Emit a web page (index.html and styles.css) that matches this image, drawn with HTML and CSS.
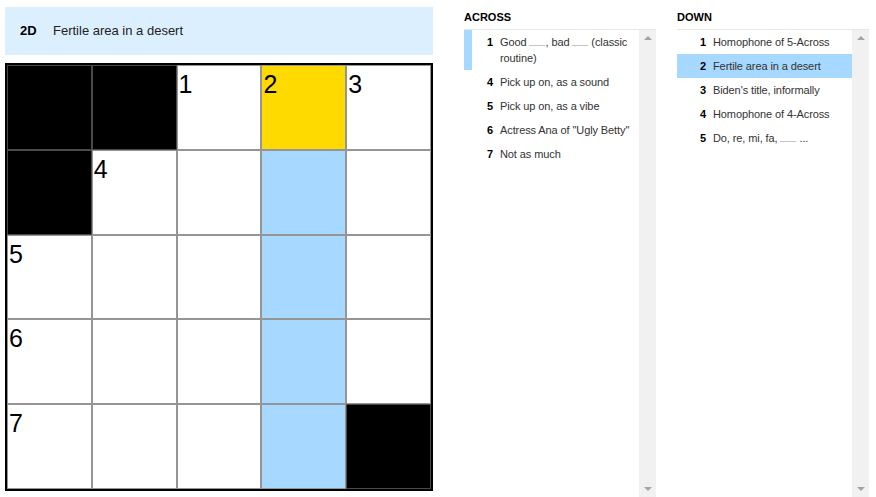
FILE: index.html
```html
<!DOCTYPE html>
<html lang="en">
<head>
    <meta charset="UTF-8">
    <title>Mini Crossword</title>
    <link rel="stylesheet" href="styles.css">
</head>
<body>
    <div class="layout">
        <div class="board">
            <div class="clue-bar">
                <span class="clue-bar-num">2D</span>
                <span class="clue-bar-text">Fertile area in a desert</span>
            </div>
            <div class="grid">
                <div class="cell block"></div>
                <div class="cell block"></div>
                <div class="cell"><span class="cell-num">1</span></div>
                <div class="cell selected"><span class="cell-num">2</span></div>
                <div class="cell"><span class="cell-num">3</span></div>

                <div class="cell block"></div>
                <div class="cell"><span class="cell-num">4</span></div>
                <div class="cell"></div>
                <div class="cell word"></div>
                <div class="cell"></div>

                <div class="cell"><span class="cell-num">5</span></div>
                <div class="cell"></div>
                <div class="cell"></div>
                <div class="cell word"></div>
                <div class="cell"></div>

                <div class="cell"><span class="cell-num">6</span></div>
                <div class="cell"></div>
                <div class="cell"></div>
                <div class="cell word"></div>
                <div class="cell"></div>

                <div class="cell"><span class="cell-num">7</span></div>
                <div class="cell"></div>
                <div class="cell"></div>
                <div class="cell word"></div>
                <div class="cell block"></div>
            </div>
        </div>

        <div class="clue-list">
            <h3 class="clue-list-title">Across</h3>
            <div class="clue-list-body">
                <ol class="clues">
                    <li class="clue cross"><span class="clue-num">1</span><span class="clue-text">Good <i class="blank"></i>, bad <i class="blank"></i> (classic routine)</span></li>
                    <li class="clue"><span class="clue-num">4</span><span class="clue-text">Pick up on, as a sound</span></li>
                    <li class="clue"><span class="clue-num">5</span><span class="clue-text">Pick up on, as a vibe</span></li>
                    <li class="clue"><span class="clue-num">6</span><span class="clue-text">Actress Ana of "Ugly Betty"</span></li>
                    <li class="clue"><span class="clue-num">7</span><span class="clue-text">Not as much</span></li>
                </ol>
                <div class="scrollbar">
                    <span class="arrow up"></span>
                    <span class="arrow down"></span>
                </div>
            </div>
        </div>

        <div class="clue-list">
            <h3 class="clue-list-title">Down</h3>
            <div class="clue-list-body">
                <ol class="clues">
                    <li class="clue"><span class="clue-num">1</span><span class="clue-text">Homophone of 5-Across</span></li>
                    <li class="clue active"><span class="clue-num">2</span><span class="clue-text">Fertile area in a desert</span></li>
                    <li class="clue"><span class="clue-num">3</span><span class="clue-text">Biden's title, informally</span></li>
                    <li class="clue"><span class="clue-num">4</span><span class="clue-text">Homophone of 4-Across</span></li>
                    <li class="clue"><span class="clue-num">5</span><span class="clue-text">Do, re, mi, fa, <i class="blank"></i> ...</span></li>
                </ol>
                <div class="scrollbar">
                    <span class="arrow up"></span>
                    <span class="arrow down"></span>
                </div>
            </div>
        </div>
    </div>
</body>
</html>
```

FILE: styles.css
```css
:root {
    --highlight: #a7d8ff;
    --selected: #ffda00;
    --bar-bg: #dcefff;
    --text: #333;
    --scroll-track: #f1f1f1;
}

* {
    margin: 0;
    padding: 0;
    box-sizing: border-box;
}

body {
    font-family: 'Liberation Sans', Arial, sans-serif;
    color: var(--text);
    background: #fff;
    overflow: hidden;
    height: 497px;
}

.layout {
    display: flex;
    gap: 21px;
    padding-left: 5px;
    height: 100%;
}

/* Board */
.board {
    flex-shrink: 0;
    width: 428px;
    padding-top: 7px;
    margin-right: 10px;
}

.clue-bar {
    height: 48px;
    background: var(--bar-bg);
    display: flex;
    align-items: center;
    padding-left: 15px;
    padding-bottom: 1px;
    font-size: 13px;
    color: #222;
}

.clue-bar-num {
    font-weight: bold;
    min-width: 33px;
    color: #000;
}

.grid {
    margin-top: 8px;
    width: 428px;
    height: 428px;
    border: 2px solid #000;
    display: grid;
    grid-template-columns: repeat(5, 1fr);
    grid-template-rows: repeat(5, 1fr);
}

.cell {
    position: relative;
    background: #fff;
    border: 1px solid #959595;
}

.cell.block {
    background: #000;
    border-color: #4a4a4a;
}

.cell.selected {
    background: var(--selected);
}

.cell.word {
    background: var(--highlight);
}

.cell-num {
    position: absolute;
    top: 6px;
    left: 1px;
    font-size: 25px;
    line-height: 1;
    color: #000;
}

/* Clue lists */
.clue-list {
    flex-shrink: 0;
    width: 192px;
    display: flex;
    flex-direction: column;
}

.clue-list-title {
    font-size: 11px;
    font-weight: bold;
    text-transform: uppercase;
    color: #000;
    line-height: 13px;
    padding-top: 11px;
    padding-bottom: 5px;
    border-bottom: 1px solid #e6e6e6;
}

.clue-list-body {
    flex: 1;
    display: flex;
}

.clues {
    flex: 1;
    list-style: none;
}

.clue {
    display: flex;
    font-size: 11px;
    letter-spacing: -0.1px;
    line-height: 16px;
    padding: 4px 2px 4px 0;
    border-left: 8px solid transparent;
}

.clue.cross {
    border-left-color: var(--highlight);
}

.clue.active {
    background: var(--highlight);
    border-left-color: var(--highlight);
}

.clue-num {
    width: 21px;
    text-align: right;
    font-weight: bold;
    color: #000;
    margin-right: 7px;
    flex-shrink: 0;
}

.clue-text {
    color: var(--text);
}

/* blank in a clue, drawn as a faint underline */
.blank {
    display: inline-block;
    width: 16px;
    height: 10px;
    border-bottom: 1px solid #c4c4c4;
}

.scrollbar {
    width: 17px;
    flex-shrink: 0;
    background: var(--scroll-track);
    display: flex;
    flex-direction: column;
    justify-content: space-between;
    align-items: center;
    padding: 6px 0;
}

.arrow {
    width: 0;
    height: 0;
    border-left: 4px solid transparent;
    border-right: 4px solid transparent;
}

.arrow.up {
    border-bottom: 4px solid #a3a3a3;
}

.arrow.down {
    border-top: 4px solid #a3a3a3;
}
```
